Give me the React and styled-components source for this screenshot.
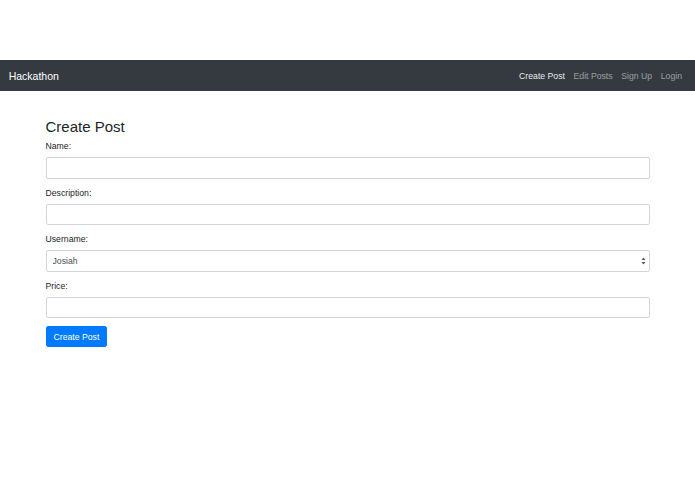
import React, { useState } from 'react'
import styled, { createGlobalStyle } from 'styled-components'

const GlobalStyle = createGlobalStyle`
  html, body {
    margin: 0;
    padding: 0;
    background: #ffffff;
  }
  body {
    font-family: "Liberation Sans", Arial, sans-serif;
    font-size: 8.7px;
    color: #212529;
  }
  * {
    box-sizing: border-box;
  }
`

const Page = styled.div`
  padding-top: 60px;
`

const Navbar = styled.nav`
  height: 31px;
  background-color: #343a40;
  display: flex;
  align-items: center;
  justify-content: space-between;
  padding: 0 8.7px;
`

const Brand = styled.a`
  color: #ffffff;
  font-size: 10.5px;
  text-decoration: none;
`

const NavList = styled.div`
  display: flex;
`

const NavLink = styled.a`
  padding: 0 4.3px;
  font-size: 8.7px;
  text-decoration: none;
  color: ${p => (p.$active ? 'rgba(255,255,255,0.92)' : 'rgba(255,255,255,0.5)')};
`

const Container = styled.div`
  width: 621px;
  margin: 0 auto;
  padding: 27px 8.5px 0;
`

const Title = styled.h3`
  margin: 0 0 4px;
  font-size: 15px;
  font-weight: 500;
  line-height: 1.2;
`

const FormGroup = styled.div`
  margin-bottom: 8px;
`

const Label = styled.label`
  display: block;
  margin-bottom: 4px;
  line-height: 13px;
  font-size: 8.7px;
  color: #212529;
`

const Input = styled.input`
  display: block;
  width: 100%;
  height: 21.5px;
  padding: 0 6.5px;
  border: 1px solid #ced4da;
  border-radius: 2.2px;
  font-family: inherit;
  font-size: 8.7px;
  color: #495057;
  background: #ffffff;
  outline: none;
`

const SelectWrap = styled.div`
  position: relative;
`

const Select = styled.select`
  display: block;
  width: 100%;
  height: 21.5px;
  padding: 0 6px;
  border: 1px solid #ced4da;
  border-radius: 2.2px;
  font-family: inherit;
  font-size: 8.7px;
  color: #495057;
  background: #ffffff;
  appearance: none;
  outline: none;
`

const Arrows = styled.svg`
  position: absolute;
  right: 4px;
  top: 7px;
  pointer-events: none;
`

const Button = styled.button`
  height: 21px;
  padding: 0 7px;
  border: 1px solid #007bff;
  border-radius: 2.2px;
  background-color: #007bff;
  color: #ffffff;
  font-family: inherit;
  font-size: 8.7px;
  cursor: pointer;
`

function App() {
  const [form, setForm] = useState({ name: '', description: '', username: 'Josiah', price: '' })

  const onChange = (event) => {
    const { name, value } = event.target
    setForm({ ...form, [name]: value })
  }

  return (
    <Page>
      <GlobalStyle />
      <Navbar>
        <Brand href="#">Hackathon</Brand>
        <NavList>
          <NavLink href="#" $active>Create Post</NavLink>
          <NavLink href="#">Edit Posts</NavLink>
          <NavLink href="#">Sign Up</NavLink>
          <NavLink href="#">Login</NavLink>
        </NavList>
      </Navbar>
      <Container>
        <Title>Create Post</Title>
        <form onSubmit={e => e.preventDefault()}>
          <FormGroup>
            <Label htmlFor="name">Name:</Label>
            <Input id="name" name="name" value={form.name} onChange={onChange} />
          </FormGroup>
          <FormGroup>
            <Label htmlFor="description">Description:</Label>
            <Input id="description" name="description" value={form.description} onChange={onChange} />
          </FormGroup>
          <FormGroup>
            <Label htmlFor="username">Username:</Label>
            <SelectWrap>
              <Select id="username" name="username" value={form.username} onChange={onChange}>
                <option value="Josiah">Josiah</option>
              </Select>
              <Arrows width="5" height="8" viewBox="0 0 5 8">
                <path d="M2.5 0.5 L4.5 3 L0.5 3 Z" fill="#555" />
                <path d="M2.5 7.5 L4.5 5 L0.5 5 Z" fill="#555" />
              </Arrows>
            </SelectWrap>
          </FormGroup>
          <FormGroup>
            <Label htmlFor="price">Price:</Label>
            <Input id="price" name="price" value={form.price} onChange={onChange} />
          </FormGroup>
          <Button type="submit">Create Post</Button>
        </form>
      </Container>
    </Page>
  )
}

export default App
